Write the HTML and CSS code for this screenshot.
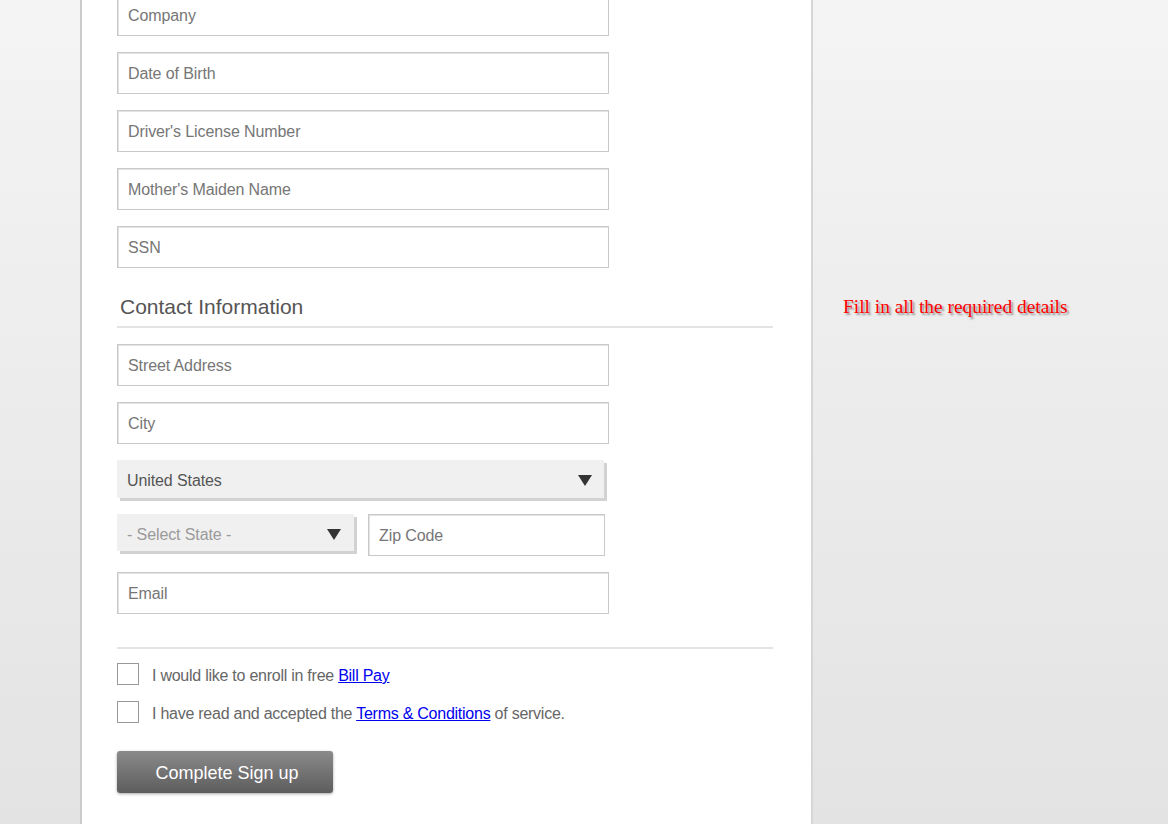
FILE: index.html
```html
<!DOCTYPE html>
<html lang="en">
<head>
<meta charset="utf-8">
<title>Sign up</title>
<link rel="stylesheet" href="styles.css">
</head>
<body>
<div class="page">
  <main class="panel">
    <form class="form">
      <input class="field" type="text" placeholder="Company">
      <input class="field" type="text" placeholder="Date of Birth">
      <input class="field" type="text" placeholder="Driver's License Number">
      <input class="field" type="text" placeholder="Mother's Maiden Name">
      <input class="field" type="text" placeholder="SSN">

      <h2 class="section-title">Contact Information</h2>

      <input class="field" type="text" placeholder="Street Address">
      <input class="field" type="text" placeholder="City">

      <div class="select select-country">
        <span class="select-value">United States</span>
        <span class="caret"></span>
      </div>

      <div class="row">
        <div class="select select-state">
          <span class="select-value muted">- Select State -</span>
          <span class="caret"></span>
        </div>
        <input class="field field-zip" type="text" placeholder="Zip Code">
      </div>

      <input class="field" type="text" placeholder="Email">

      <hr class="divider">

      <label class="check">
        <span class="box"></span>
        <span class="check-text">I would like to enroll in free <a href="#">Bill Pay</a></span>
      </label>
      <label class="check">
        <span class="box"></span>
        <span class="check-text">I have read and accepted the <a href="#">Terms &amp; Conditions</a> of service.</span>
      </label>

      <button class="submit" type="button">Complete Sign up</button>
    </form>
  </main>
  <aside class="notice">Fill in all the required details</aside>
</div>
</body>
</html>
```

FILE: styles.css
```css
html, body {
  margin: 0;
  padding: 0;
  height: 100%;
}

body {
  overflow: hidden;
  font-family: "Liberation Sans", Arial, sans-serif;
  background: linear-gradient(to bottom, #f4f4f4 0%, #e3e3e3 100%);
}

.page {
  display: flex;
  align-items: stretch;
  padding-left: 80px;
  margin-top: -6px;
  height: 840px;
}

.panel {
  box-sizing: border-box;
  width: 733px;
  background: #fff;
  border-left: 2px solid #cbcbcb;
  border-right: 2px solid #d6d6d6;
  padding-left: 35px;
}

.form {
  display: flex;
  flex-direction: column;
  align-items: flex-start;
  gap: 16px;
  width: 656px;
}

.field {
  box-sizing: border-box;
  width: 492px;
  height: 42px;
  margin: 0;
  padding: 2px 10px 0;
  border: 1px solid #c9c9c9;
  box-shadow: inset 1px 1px 0 #e2e2e2;
  background: #fff;
  font-family: "Liberation Sans", Arial, sans-serif;
  font-size: 16px;
  letter-spacing: -0.1px;
  color: #555;
  outline: none;
}

.field::placeholder {
  color: #767676;
  opacity: 1;
}

.section-title {
  align-self: stretch;
  margin: 11px 0 0;
  padding: 0 0 7px 3px;
  font-size: 21px;
  line-height: 24px;
  font-weight: normal;
  color: #555;
  border-bottom: 2px solid #e3e3e3;
}

.select {
  box-sizing: border-box;
  display: flex;
  align-items: center;
  justify-content: space-between;
  background: #f0f0f0;
  box-shadow: 3px 3px 0 #d2d2d2;
  padding: 3px 12px 0 10px;
  font-size: 16px;
  letter-spacing: -0.1px;
  color: #555;
}

.select-country {
  width: 487px;
  height: 38px;
}

.select-state {
  width: 237px;
  height: 37px;
  padding-top: 4px;
  padding-right: 13px;
}

.muted {
  color: #9a9a9a;
}

.caret {
  width: 0;
  height: 0;
  border-left: 7.5px solid transparent;
  border-right: 7.5px solid transparent;
  border-top: 11px solid #333;
}

.select-state .caret {
  border-left-width: 7px;
  border-right-width: 7px;
}

.row {
  display: flex;
  align-items: flex-start;
  gap: 14px;
}

.field-zip {
  width: 237px;
}

.divider {
  align-self: stretch;
  margin: 17px 0 -2px;
  border: 0;
  height: 2px;
  background: #e3e3e3;
}

.check {
  display: flex;
  align-items: center;
  gap: 13px;
  font-size: 16px;
  letter-spacing: -0.25px;
  color: #666;
  cursor: pointer;
}

.box {
  box-sizing: border-box;
  width: 22px;
  height: 22px;
  border: 1px solid #999;
  background: #fff;
}

.check-text {
  line-height: 18px;
  padding-top: 4px;
}

.check-text a {
  color: #0000ee;
  text-decoration: underline;
}

.submit {
  margin-top: 12px;
  width: 216px;
  height: 42px;
  border: 0;
  border-radius: 3px;
  background: linear-gradient(to bottom, #8a8a8a 0%, #5d5d5d 100%);
  box-shadow: 0 1px 3px rgba(0, 0, 0, 0.35);
  color: #fff;
  font-family: "Liberation Sans", Arial, sans-serif;
  font-size: 18px;
  padding: 2px 0 0 4px;
  cursor: pointer;
}

.notice {
  margin-left: 30px;
  padding-top: 302px;
  font-family: "Liberation Serif", "Times New Roman", serif;
  font-size: 19.4px;
  line-height: 22px;
  color: #ff0000;
  text-shadow: 2px 2px 2px #8f8f8f;
  white-space: nowrap;
}
```
